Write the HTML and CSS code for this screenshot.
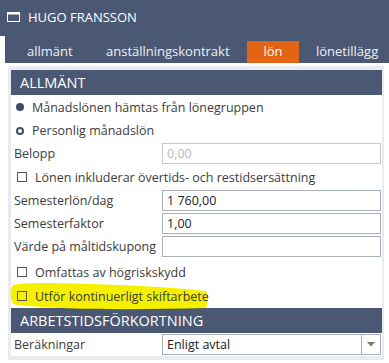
FILE: index.html
```html
<!DOCTYPE html>
<html lang="sv">
<head>
<meta charset="utf-8">
<link rel="stylesheet" href="styles.css">
</head>
<body>
<div class="titlebar">
  <svg class="winicon" width="13" height="10" viewBox="0 0 13 10"><rect x="0.5" y="0.5" width="12" height="9" fill="none" stroke="#fff" stroke-width="1"/><rect x="0" y="0" width="13" height="2.5" fill="#fff"/></svg>
  <span class="title">HUGO FRANSSON</span>
</div>
<div class="tabbar">
  <div class="tabs">
    <span class="tab t1">allmänt</span>
    <span class="tab t2">anställningskontrakt</span>
    <span class="tab t3 active">lön</span>
    <span class="tab t4">lönetillägg</span>
  </div>
</div>
<div class="panel">
  <div class="inner">
    <div class="section">ALLMÄNT</div>
    <div class="check-row r1"><span class="radio filled"></span><span class="txt">Månadslönen hämtas från lönegruppen</span></div>
    <div class="check-row r2"><span class="radio ring"></span><span class="txt">Personlig månadslön</span></div>
    <div class="field"><span class="label">Belopp</span><div class="input disabled">0,00</div></div>
    <div class="check-row cb"><span class="box"></span><span class="txt">Lönen inkluderar övertids- och restidsersättning</span></div>
    <div class="field"><span class="label">Semesterlön/dag</span><div class="input">1 760,00</div></div>
    <div class="field"><span class="label">Semesterfaktor</span><div class="input">1,00</div></div>
    <div class="field"><span class="label">Värde på måltidskupong</span><div class="input"></div></div>
    <div class="check-row cb gap"><span class="box"></span><span class="txt">Omfattas av högriskskydd</span></div>
    <div class="check-row cb hl">
      <svg class="marker" width="200" height="30" viewBox="0 0 200 30"><path d="M2 4 C 8 0, 40 1, 80 2 C 120 3, 170 6, 196 9 C 199 14, 198 22, 196 26 C 150 27, 100 28, 50 26 C 30 25, 10 24, 3 22 C 0 16, 0 9, 2 4 Z" fill="#f6f000"/></svg>
      <span class="box"></span><span class="txt">Utför kontinuerligt skiftarbete</span>
    </div>
    <div class="section s2">ARBETSTIDSFÖRKORTNING</div>
    <div class="field"><span class="label">Beräkningar</span>
      <div class="input select"><span class="val">Enligt avtal</span><span class="arrow"><svg width="8" height="5" viewBox="0 0 8 5"><path d="M0 0 H8 L4 4.5 Z" fill="#777"/></svg></span></div>
    </div>
  </div>
</div>
</body>
</html>
```

FILE: styles.css
```css
* { box-sizing: border-box; }
html, body { margin: 0; padding: 0; background: #fff; }
body {
  width: 389px;
  height: 363px;
  overflow: hidden;
  font-family: "Open Sans", "Noto Sans", sans-serif;
}
.titlebar {
  height: 36px;
  background: #4a5874;
  display: flex;
  align-items: center;
  padding-left: 7px;
  padding-bottom: 2px;
}
.winicon { display: block; margin-right: 8px; }
.title {
  color: #fff;
  font-size: 13px;
}
.tabbar {
  margin-left: 5px;
  height: 27px;
  background: #4a5874;
  display: flex;
  align-items: flex-end;
  overflow: hidden;
}
.tabs { display: flex; height: 22px; padding-left: 7px; }
.tab {
  flex: none;
  color: #eef0f4;
  font-size: 13px;
  line-height: 21px;
  white-space: nowrap;
}
.t1 { width: 78px; padding-left: 15px; }
.t2 { width: 157px; padding-left: 16px; }
.t3 { width: 52px; text-align: center; }
.t4 { width: 90px; padding-left: 17px; }
.tab.active {
  background: #e36412;
  color: #fff;
}
.panel {
  margin: 3px 5px 0 8px;
  background: #e9ebef;
  padding: 4px 2px 4px 3px;
}
.inner { background: #fff; }
.section {
  height: 25px;
  background: #4a5874;
  color: #fff;
  font-size: 14.5px;
  line-height: 25px;
  padding-left: 9px;
}
.check-row {
  position: relative;
  display: flex;
  align-items: center;
  height: 24px;
  padding-left: 5px;
  font-size: 12.5px;
  color: #3c3c3c;
}
.check-row.r2 { height: 23px; }
.check-row .txt { position: relative; }
.radio {
  width: 8px; height: 8px;
  border-radius: 50%;
  margin-right: 8px;
  flex: none;
}
.radio.filled { background: #3d4c69; }
.radio.ring { border: 2px solid #3d4c69; background: #fff; }
.box {
  position: relative;
  width: 10px; height: 10px;
  border: 1px solid #555;
  margin-right: 8px;
  flex: none;
}
.cb { padding-left: 6px; }
.cb.gap { margin-top: 2px; }
.hl .marker { position: absolute; left: -1px; top: -2px; }
.field {
  display: flex;
  height: 23px;
  align-items: flex-start;
}
.label {
  width: 151px;
  flex: none;
  padding-left: 3px;
  font-size: 12.5px;
  color: #3c3c3c;
  line-height: 23px;
  white-space: nowrap;
}
.input {
  margin-top: 1px;
  width: 219px;
  height: 21px;
  border: 1px solid #a9afbb;
  font-size: 12.5px;
  line-height: 19px;
  padding-left: 4px;
  color: #222;
}
.input.disabled { color: #b8b8b8; border-color: #c4c8d0; }
.select { display: flex; padding-left: 0; }
.select .val { flex: 1; padding-left: 4px; }
.select .arrow {
  width: 19px;
  border-left: 1px solid #a9afbb;
  display: flex;
  align-items: center;
  justify-content: center;
}
.select .arrow svg { display: block; }
```
